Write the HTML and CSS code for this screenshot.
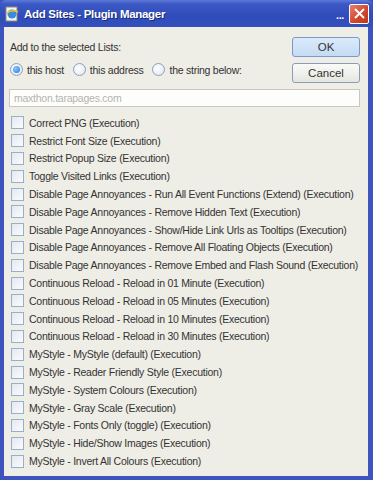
FILE: index.html
```html
<!DOCTYPE html>
<html lang="en">
<head>
    <meta charset="UTF-8">
    <meta name="viewport" content="width=device-width, initial-scale=1.0">
    <title>Add Sites - Plugin Manager</title>
    <link rel="stylesheet" href="styles.css">
</head>
<body>
    <div class="window">
        <div class="titlebar">
            <svg class="app-icon" width="14" height="16" viewBox="0 0 14 16">
                <rect x="1" y="1" width="11" height="14" fill="#f4f4ee" stroke="#8a8a80"/>
                <circle cx="7" cy="8" r="4.5" fill="#3a8be0"/>
                <path d="M2 7 Q7 3 13 6" stroke="#f0c020" stroke-width="1.6" fill="none"/>
            </svg>
            <span class="title">Add Sites - Plugin Manager</span>
            <span class="dots">...</span>
            <button class="close">
                <svg width="13" height="13" viewBox="0 0 13 13"><path d="M2 2 L11 11 M11 2 L2 11" stroke="#fff" stroke-width="2"/></svg>
            </button>
        </div>
        <div class="content">
            <div class="top">
                <div class="options">
                    <div class="label">Add to the selected Lists:</div>
                    <div class="radios">
                        <label class="radio"><span class="dot on"></span>this host</label>
                        <label class="radio"><span class="dot"></span>this address</label>
                        <label class="radio"><span class="dot"></span>the string below:</label>
                    </div>
                </div>
                <div class="buttons">
                    <button class="btn default">OK</button>
                    <button class="btn">Cancel</button>
                </div>
            </div>
            <div class="field">maxthon.tarapages.com</div>
            <ul class="list">
                <li><span class="box"></span>Correct PNG (Execution)</li>
                <li><span class="box"></span>Restrict Font Size (Execution)</li>
                <li><span class="box"></span>Restrict Popup Size (Execution)</li>
                <li><span class="box"></span>Toggle Visited Links (Execution)</li>
                <li><span class="box"></span>Disable Page Annoyances - Run All Event Functions (Extend) (Execution)</li>
                <li><span class="box"></span>Disable Page Annoyances - Remove Hidden Text (Execution)</li>
                <li><span class="box"></span>Disable Page Annoyances - Show/Hide Link Urls as Tooltips (Execution)</li>
                <li><span class="box"></span>Disable Page Annoyances - Remove All Floating Objects (Execution)</li>
                <li><span class="box"></span>Disable Page Annoyances - Remove Embed and Flash Sound (Execution)</li>
                <li><span class="box"></span>Continuous Reload - Reload in 01 Minute (Execution)</li>
                <li><span class="box"></span>Continuous Reload - Reload in 05 Minutes (Execution)</li>
                <li><span class="box"></span>Continuous Reload - Reload in 10 Minutes (Execution)</li>
                <li><span class="box"></span>Continuous Reload - Reload in 30 Minutes (Execution)</li>
                <li><span class="box"></span>MyStyle - MyStyle (default) (Execution)</li>
                <li><span class="box"></span>MyStyle - Reader Friendly Style (Execution)</li>
                <li><span class="box"></span>MyStyle - System Colours (Execution)</li>
                <li><span class="box"></span>MyStyle - Gray Scale (Execution)</li>
                <li><span class="box"></span>MyStyle - Fonts Only (toggle) (Execution)</li>
                <li><span class="box"></span>MyStyle - Hide/Show Images (Execution)</li>
                <li><span class="box"></span>MyStyle - Invert All Colours (Execution)</li>
            </ul>
        </div>
    </div>
</body>
</html>
```

FILE: styles.css
```css
body {
    margin: 0;
    background: #fff;
    font-family: "Liberation Sans", Arial, sans-serif;
    font-size: 10.5px;
    letter-spacing: -0.25px;
    color: #333;
}
.window {
    width: 373px;
    height: 480px;
    box-sizing: border-box;
    background: #3d54be;
    padding: 0 5px 4px 4px;
    display: flex;
    flex-direction: column;
}
.titlebar {
    height: 27px;
    flex: none;
    margin: 0 -5px 0 -4px;
    padding: 0 4px 0 5px;
    display: flex;
    align-items: center;
    background: linear-gradient(#5d7ad8 0%, #3b58c4 15%, #2f4cba 60%, #3450bd 100%);
    border-radius: 6px 6px 0 0;
}
.app-icon {
    margin-right: 5px;
}
.title {
    color: #fff;
    font-family: "Liberation Sans", Arial, sans-serif;
    font-weight: bold;
    font-size: 11.5px;
    letter-spacing: -0.3px;
    flex: 1;
    text-shadow: 1px 1px 0 #1a2a70;
}
.dots {
    color: #fff;
    font-weight: bold;
    margin-right: 5px;
    margin-top: 2px;
}
.close {
    width: 20px;
    height: 20px;
    padding: 0;
    border: 1px solid #fff;
    border-radius: 2px;
    background: linear-gradient(135deg, #e88070, #d14428 60%, #c03818);
    display: flex;
    align-items: center;
    justify-content: center;
}
.content {
    flex: 1;
    background: #eeede6;
    padding: 10px 8px 0 6px;
}
.top {
    display: flex;
    justify-content: space-between;
}
.label {
    margin-top: 4px;
}
.radios {
    display: flex;
    gap: 9px;
    margin-top: 10px;
}
.radio {
    display: flex;
    align-items: center;
    gap: 4px;
}
.dot {
    width: 11px;
    height: 11px;
    border: 1px solid #8aa0c4;
    border-radius: 50%;
    background: radial-gradient(circle at 40% 40%, #fff, #dde4ee);
    display: flex;
    align-items: center;
    justify-content: center;
}
.dot.on::after {
    content: "";
    width: 7px;
    height: 7px;
    border-radius: 50%;
    background: radial-gradient(circle at 35% 35%, #8cc8f8, #2a7ad8);
}
.buttons {
    display: flex;
    flex-direction: column;
    gap: 6px;
}
.btn {
    width: 68px;
    height: 20px;
    font-family: "Liberation Sans", Arial, sans-serif;
    font-size: 11.5px;
    color: #333;
    border: 1px solid #8a9cbc;
    border-radius: 3px;
    background: linear-gradient(#fafaf8, #e6e6e0);
}
.btn.default {
    background: linear-gradient(#dceafa, #c4dbf4);
    border-color: #7a98c8;
}
.field {
    margin: 6px 0 0 -1px;
    height: 16px;
    line-height: 16px;
    padding: 0 4px;
    border: 1px solid #c8c8c0;
    background: #fdfdfc;
    color: #b4b4b0;
}
.list {
    list-style: none;
    margin: 7px 0 0 1px;
    padding: 0;
}
.list li {
    height: 17.8px;
    display: flex;
    align-items: center;
    gap: 5px;
    white-space: nowrap;
}
.box {
    flex: none;
    width: 11px;
    height: 11px;
    border: 1px solid #96aed0;
    background: linear-gradient(135deg, #e4e8f0, #fbfbfb);
}
```
